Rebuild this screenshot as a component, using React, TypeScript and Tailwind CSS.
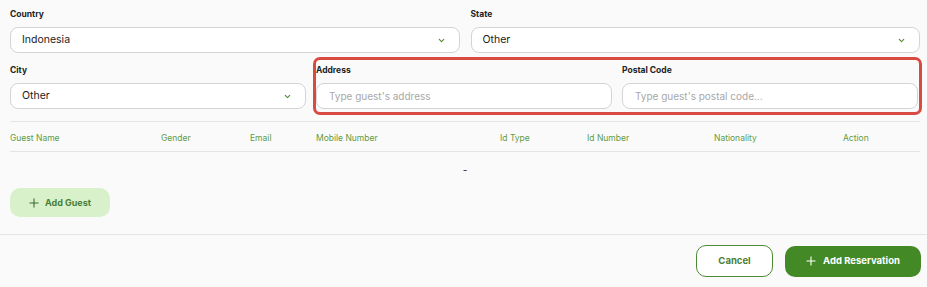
import React from "react";

const Chevron = () => (
  <svg width="9" height="9" viewBox="0 0 10 10" fill="none">
    <path d="M2.5 3.8 L5 6.2 L7.5 3.8" stroke="#4e8a2f" strokeWidth="1.2" strokeLinecap="round" strokeLinejoin="round" />
  </svg>
);

const Plus = ({ color }: { color: string }) => (
  <svg width="10" height="10" viewBox="0 0 10 10" fill="none">
    <path d="M5 0.5 V9.5 M0.5 5 H9.5" stroke={color} strokeWidth="1.1" />
  </svg>
);

function Select({ value }: { value: string }) {
  return (
    <div className="h-[26px] rounded-[8px] border border-[#d4d4d4] bg-white flex items-center justify-between pl-[11px] pr-[13px] text-[10.5px] text-[#222]">
      <span>{value}</span>
      <Chevron />
    </div>
  );
}

function Input({ placeholder }: { placeholder: string }) {
  return (
    <div className="h-[26px] rounded-[8px] border border-[#d4d4d4] bg-white flex items-center pl-[12px] text-[10px] text-[#a8a8a8]">
      {placeholder}
    </div>
  );
}

function Label({ children }: { children: React.ReactNode }) {
  return <div className="text-[8.5px] font-bold text-[#222] h-[12px] leading-[12px] mb-[7px]">{children}</div>;
}

export default function App() {
  const headers = ["Guest Name", "Gender", "Email", "Mobile Number", "Id Type", "Id Number", "Nationality", "Action"];
  return (
    <div className="w-[927px] h-[287px] bg-[#fafafa] overflow-hidden" style={{ fontFamily: "Inter, 'Noto Sans', sans-serif" }}>
      <div className="pl-[10px] pr-[7px] pt-[8px]">
        <div className="grid grid-cols-2 gap-x-[11px]">
          <div>
            <Label>Country</Label>
            <Select value="Indonesia" />
          </div>
          <div>
            <Label>State</Label>
            <Select value="Other" />
          </div>
        </div>
        <div className="flex mt-[4px] mr-[-2px]">
          <div className="w-[296px] pt-[7px]">
            <Label>City</Label>
            <Select value="Other" />
          </div>
          <div className="ml-[7px] flex-1 h-[58px] rounded-[7px] border-[3px] border-[#d94a43] grid grid-cols-2 gap-x-[10px] pl-0 pr-[1px] pt-[4px]">
            <div>
              <Label>Address</Label>
              <Input placeholder="Type guest's address" />
            </div>
            <div>
              <Label>Postal Code</Label>
              <Input placeholder="Type guest's postal code..." />
            </div>
          </div>
        </div>
        <div className="mt-[6px] border-t border-[#e4e4e4]" />
        <div className="grid grid-cols-[151px_89px_66px_184px_87px_127px_129px_1fr] h-[30px] pt-[4px] items-center text-[8.5px] text-[#5f9a45] border-b border-[#e4e4e4]">
          {headers.map((h) => (
            <div key={h}>{h}</div>
          ))}
        </div>
        <div className="h-[36px] flex items-center justify-center text-[10px] text-[#222]">-</div>
        <button className="w-[100px] h-[29px] rounded-[10px] bg-[#d8f1cb] flex items-center justify-center gap-[6px] text-[9px] font-bold text-[#4a7f36]">
          <Plus color="#3f6a30" />
          Add Guest
        </button>
      </div>
      <div className="mt-[17px] border-t border-[#e4e4e4]" />
      <div className="flex justify-end items-center gap-[12px] pr-[6px] pt-[10px]">
        <button className="w-[77px] h-[32px] rounded-[10px] border border-[#4d8a33] bg-white text-[9.5px] font-bold text-[#4a8034]">
          Cancel
        </button>
        <button className="w-[136px] h-[31px] rounded-[10px] bg-[#438a26] flex items-center justify-center gap-[7px] text-[9.5px] font-bold text-white">
          <Plus color="#ffffff" />
          Add Reservation
        </button>
      </div>
    </div>
  );
}
